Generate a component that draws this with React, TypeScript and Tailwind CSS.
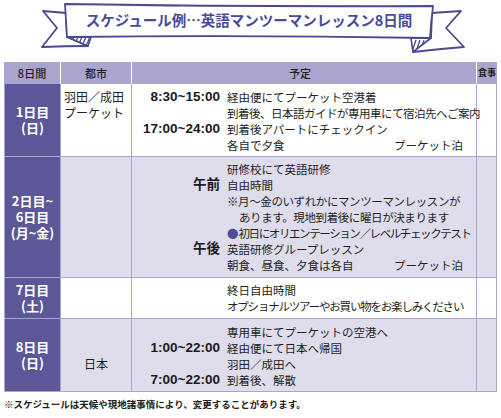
import React from "react";

const JP = "'Noto Sans CJK JP', 'Noto Sans', sans-serif";
const TIME = "'Liberation Sans', 'Noto Sans CJK JP', sans-serif";

function Ribbon() {
  const s = "#4b4a8c";
  return (
    <svg className="absolute left-0 top-0" width="501" height="56" viewBox="0 0 501 56">
      <defs>
        <clipPath id="fl">
          <polygon points="67,37 91,37 88,46" />
        </clipPath>
        <clipPath id="fr">
          <polygon points="411,38 431,38 413,52" />
        </clipPath>
      </defs>
      <path d="M43,11 L66,13 L67,37 L88,46 Q65,46 42,47 L57,28 Z" fill="#fff" stroke={s} strokeWidth="1.8" strokeLinejoin="round" />
      <polygon points="67,37 91,37 88,46" fill="#fff" stroke={s} strokeWidth="1.6" strokeLinejoin="round" />
      <g clipPath="url(#fl)" stroke={s} strokeWidth="1.3">
        <line x1="70" y1="46" x2="74" y2="37" />
        <line x1="74" y1="46" x2="78" y2="37" />
        <line x1="78" y1="46" x2="82" y2="37" />
        <line x1="82" y1="46" x2="86" y2="37" />
        <line x1="86" y1="46" x2="90" y2="37" />
      </g>
      <path d="M432,13 L461,11 L446,28 L464,47 Q438,49 413,52 L412,38 L431,38 Z" fill="#fff" stroke={s} strokeWidth="1.8" strokeLinejoin="round" />
      <polygon points="411,38 431,38 413,52" fill="#fff" stroke={s} strokeWidth="1.6" strokeLinejoin="round" />
      <g clipPath="url(#fr)" stroke={s} strokeWidth="1.3">
        <line x1="412" y1="52" x2="416" y2="40" />
        <line x1="416" y1="52" x2="420" y2="40" />
        <line x1="420" y1="52" x2="424" y2="40" />
        <line x1="424" y1="52" x2="428" y2="40" />
      </g>
      <path d="M65,4 Q250,7 433,6 Q431,22 430,38 Q250,35 67,37 Q66,20 65,4 Z" fill="#fff" stroke={s} strokeWidth="1.8" strokeLinejoin="round" />
      <path d="M120,5.5 L180,6.5 M300,6 L360,5.8 M150,36.2 L230,35.6" stroke={s} strokeWidth="0.6" opacity="0.5" />
    </svg>
  );
}

function Line({ label, children, className = "" }: { label?: string; children?: React.ReactNode; className?: string }) {
  return (
    <>
      <div className="text-right font-bold text-[13.5px] leading-[16px] text-[#1a1a1a] whitespace-nowrap" style={{ fontFamily: TIME }}>
        {label ?? ""}
      </div>
      <div className={"text-[11.5px] leading-[16px] text-[#231f20] whitespace-nowrap " + className}>{children}</div>
    </>
  );
}

function Sched({ children }: { children: React.ReactNode }) {
  return <div className="grid grid-cols-[88px_1fr] gap-x-[7px] pt-[5px]">{children}</div>;
}

function Day({ children }: { children: React.ReactNode }) {
  return (
    <div className="bg-[#5c5797] border-l border-r border-b border-[#aaa5cf] flex flex-col items-center justify-center text-white font-bold text-[13px] leading-[16px] text-center">
      {children}
    </div>
  );
}

export default function App() {
  const cell = "border-r border-b border-[#aaa5cf]";
  const alt = "bg-[#dfdcec]";
  return (
    <div className="w-[501px] h-[418px] bg-white relative overflow-hidden" style={{ fontFamily: JP }}>
      <div className="relative h-[56px]">
        <Ribbon />
        <div className="absolute left-[65px] w-[368px] top-[10px] text-center text-[14.5px] leading-[20px] font-bold text-[#4a4a9a] whitespace-nowrap">
          スケジュール例…英語マンツーマンレッスン8日間
        </div>
      </div>
      <div className="ml-[4px] mt-[6px] w-[493px] grid grid-cols-[57px_71px_345px_20px] grid-rows-[22px_73px_121px_41px_73px]">
        <div className="bg-[#aaa5cf] border-r border-white flex items-center justify-center text-[11px] font-medium text-[#231f20]">8日間</div>
        <div className="bg-[#aaa5cf] border-r border-white flex items-center justify-center text-[11px] font-medium text-[#231f20]">都市</div>
        <div className="bg-[#aaa5cf] border-r border-white flex items-center justify-center text-[11px] font-medium text-[#231f20] pr-[8px]">予定</div>
        <div className="bg-[#aaa5cf] flex items-center justify-start pl-[1px] text-[9px] font-bold text-[#231f20] overflow-hidden whitespace-nowrap">食事</div>

        <Day>
          <div>1日目</div>
          <div>(日)</div>
        </Day>
        <div className={cell + " pl-[3px] pt-[5px] text-[12px] leading-[16px] text-[#231f20]"}>
          <div>羽田／成田</div>
          <div>プーケット</div>
        </div>
        <div className={cell}>
          <Sched>
            <Line label="8:30~15:00">経由便にてプーケット空港着</Line>
            <Line className="tracking-[-0.5px]">到着後、日本語ガイドが専用車にて宿泊先へご案内</Line>
            <Line label="17:00~24:00">到着後アパートにチェックイン</Line>
            <Line>
              <div className="flex justify-between w-[236px]">
                <span>各自で夕食</span>
                <span>プーケット泊</span>
              </div>
            </Line>
          </Sched>
        </div>
        <div className={cell}></div>

        <Day>
          <div>2日目~</div>
          <div>6日目</div>
          <div>(月~金)</div>
        </Day>
        <div className={cell + " " + alt}></div>
        <div className={cell + " " + alt}>
          <div className="grid grid-cols-[88px_1fr] gap-x-[7px] pt-[4px]">
            <Line>研修校にて英語研修</Line>
            <Line label="午前">自由時間</Line>
            <Line className="tracking-[-0.4px]">※月～金のいずれかにマンツーマンレッスンが</Line>
            <Line className="pl-[12px] tracking-[-0.4px]">あります。現地到着後に曜日が決まります</Line>
            <Line className="tracking-[-1.4px]">
              <span className="text-[#4f4b97] tracking-normal">●</span>初日にオリエンテーション／レベルチェックテスト
            </Line>
            <Line label="午後">英語研修グループレッスン</Line>
            <Line>
              <div className="flex justify-between w-[236px]">
                <span>朝食、昼食、夕食は各自</span>
                <span>プーケット泊</span>
              </div>
            </Line>
          </div>
        </div>
        <div className={cell + " " + alt}></div>

        <Day>
          <div>7日目</div>
          <div>(土)</div>
        </Day>
        <div className={cell}></div>
        <div className={cell}>
          <div className="grid grid-cols-[88px_1fr] gap-x-[7px] pt-[4px]">
            <Line>終日自由時間</Line>
            <Line className="tracking-[-1.2px]">オプショナルツアーやお買い物をお楽しみください</Line>
          </div>
        </div>
        <div className={cell}></div>

        <Day>
          <div>8日目</div>
          <div>(日)</div>
        </Day>
        <div className={cell + " " + alt + " pt-[37px] text-center text-[12px] leading-[16px] text-[#231f20]"}>日本</div>
        <div className={cell + " " + alt}>
          <Sched>
            <Line>専用車にてプーケットの空港へ</Line>
            <Line label="1:00~22:00">経由便にて日本へ帰国</Line>
            <Line>羽田／成田へ</Line>
            <Line label="7:00~22:00">到着後、解散</Line>
          </Sched>
        </div>
        <div className={cell + " " + alt}></div>
      </div>
      <div className="mt-[6px] pl-[4px] text-[9.5px] leading-[12px] font-bold text-[#231f20] whitespace-nowrap">
        ※スケジュールは天候や現地諸事情により、変更することがあります。
      </div>
    </div>
  );
}
